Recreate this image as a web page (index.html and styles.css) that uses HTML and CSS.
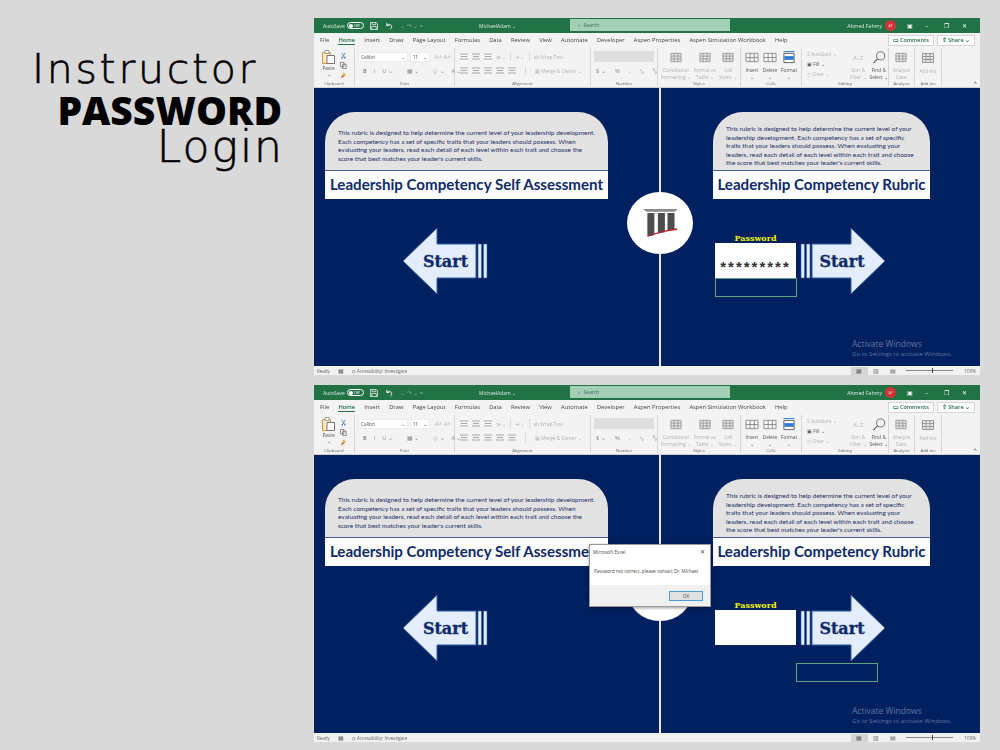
FILE: index.html
```html
<!DOCTYPE html>
<html lang="en">
<head>
    <meta charset="UTF-8">
    <title>Instructor Password Login</title>
    <link rel="stylesheet" href="styles.css">
</head>
<body>
<svg class="defs" width="0" height="0">
    <symbol id="lines" viewBox="0 0 8 7"><path d="M0 1h8M1 3.500h6M0 6h8" stroke="#a9a9a9" stroke-width="1" fill="none"/></symbol>
    <symbol id="table" viewBox="0 0 14 14"><path d="M1.500 2.500h11v9h-11zM1.500 5.500h11M1.500 8.500h11M5 2.500v9M9 2.500v9" stroke="#9a9a9a" stroke-width="1" fill="#e6e6e6"/></symbol>
    <symbol id="cells" viewBox="0 0 14 14"><path d="M.5 2.500h13v9H.5zM.5 7h13M5 2.500v9M9.500 2.500v9" stroke="#8a8a8a" stroke-width="1" fill="#f7f7f7"/></symbol>
    <symbol id="format" viewBox="0 0 14 14"><path d="M1.500 2.500h11v10h-11z" stroke="#555" fill="#fff"/><path d="M2 5.500h10v4H2z" fill="#2b7cd3"/><path d="M1 .5h12" stroke="#2b7cd3"/></symbol>
    <symbol id="paste" viewBox="0 0 13 14"><path d="M.5 2.500h8v11h-8z" fill="#fbe6c4" stroke="#d9963c"/><path d="M3 .5h4v3H3z" fill="#fff" stroke="#999"/><path d="M5 5.500h7.500v8H5z" fill="#fff" stroke="#777"/></symbol>
    <symbol id="scissors" viewBox="0 0 8 8"><path d="M2 1l3 5M6 1L3 6" stroke="#5a7fb0" fill="none"/><circle cx="2.500" cy="6.500" r="1" fill="#5a7fb0"/><circle cx="5.500" cy="6.500" r="1" fill="#5a7fb0"/></symbol>
    <symbol id="copy" viewBox="0 0 8 8"><path d="M.5.5h4v5h-4zM3 2.500h4v5H3z" stroke="#777" fill="#fff"/></symbol>
    <symbol id="brush" viewBox="0 0 8 8"><path d="M4 .5l3 3-2 1-2-2z" fill="#e9a23b"/><path d="M3 3L.5 7.500 5 5z" fill="#c8702a"/></symbol>
    <symbol id="save" viewBox="0 0 9 9"><path d="M.5.5h6.500l1.500 1.500v6.500h-8zM2.500.5v2.500h4V.5M2 8.500v-3.500h5v3.500" stroke="#fff" fill="none" stroke-width=".8"/></symbol>
    <symbol id="undo" viewBox="0 0 9 9"><path d="M2 1v3h3M2 4c2-2.500 6-1.500 5.500 2-.2 1-.8 1.700-1.500 2" stroke="#fff" fill="none"/></symbol>
    <symbol id="lens" viewBox="0 0 16 16"><circle cx="10" cy="6" r="5" stroke="#555" fill="none"/><path d="M6.500 9.500L1 15" stroke="#555" stroke-width="1.300"/></symbol>
    <symbol id="arrow" viewBox="0 0 86 68"><path d="M1 34L35 1v16h39v34H35v16z" fill="#e3edfc" stroke="#2f5f9e"/><path d="M76 17h3.500v34H76zM81.500 17H85v34h-3.500z" fill="#e3edfc" stroke="#2f5f9e" stroke-width=".6"/></symbol>
    <symbol id="pillars" viewBox="0 0 40 32"><path d="M0 0h40l-4 3H4z" fill="#8b8b8b"/><path d="M5 4.500h8V30l-8 1zM17 4.500h8V26.500l-8 1.500zM28 4.500h8V23l-8 1.500z" fill="#4d4d4d"/><path d="M5 31c11-5 22-7 34-9v2C27 25 16 28 5 32z" fill="#c4202c"/></symbol>
</svg>

<div class="page">
    <h1 class="headline">
        <span class="headline-first">Instructor</span>
        <span class="headline-black">PASSWORD</span>
        <span class="headline-last">Login</span>
    </h1>

    <div class="windows">
        <!-- first window -->
        <div class="excel">
            <div class="titlebar">
                <span class="autosave">AutoSave</span>
                <span class="toggle"><i></i>Off</span>
                <svg class="tb-icon"><use href="#save"/></svg>
                <svg class="tb-icon"><use href="#undo"/></svg>
                <span class="tb-dim">⌄ ↷ ⌄ =</span>
                <span class="filename">MichaelAdam ⌄</span>
                <span class="searchbox">⌕ &nbsp;Search</span>
                <span class="account">Ahmed Fahmy</span>
                <span class="avatar">AF</span>
                <span class="winbtns"><b>▣</b><b>–</b><b>❐</b><b>✕</b></span>
            </div>
            <div class="tabs">
                <span>File</span><span class="tab-on">Home</span><span>Insert</span><span>Draw</span><span>Page Layout</span><span>Formulas</span><span>Data</span><span>Review</span><span>View</span><span>Automate</span><span>Developer</span><span>Aspen Properties</span><span>Aspen Simulation Workbook</span><span>Help</span>
                <span class="tab-btns"><em>▭ Comments</em><em>⇧ Share ⌄</em></span>
            </div>
            <div class="ribbon">
                <div class="group g-clip">
                    <div class="group-body clip">
                        <div class="clip-paste"><svg class="ic-paste"><use href="#paste"/></svg><span>Paste</span><span>⌄</span></div>
                        <div class="clip-small"><svg><use href="#scissors"/></svg><svg><use href="#copy"/></svg><svg><use href="#brush"/></svg></div>
                    </div>
                    <div class="group-name">Clipboard</div>
                </div>
                <div class="group g-font">
                    <div class="group-body rows">
                        <div class="row"><span class="fontbox">Calibri<u>⌄</u></span><span class="sizebox">11<u>⌄</u></span><span class="dim big">A˄ A˅</span></div>
                        <div class="row dark"><b>B</b><i>I</i><span>U ⌄</span><span class="sep"></span><span>▦ ⌄</span><span class="sep"></span><span>◇ ⌄</span><span>A ⌄</span></div>
                    </div>
                    <div class="group-name">Font</div>
                </div>
                <div class="group g-align">
                    <div class="group-body rows">
                        <div class="row"><svg class="ln"><use href="#lines"/></svg><svg class="ln"><use href="#lines"/></svg><svg class="ln"><use href="#lines"/></svg><span class="dim">≫ ⌄</span><span class="sep"></span><span class="dim">⇥ ⌄</span><span class="sep"></span><span class="dim">ab Wrap Text</span></div>
                        <div class="row"><svg class="ln"><use href="#lines"/></svg><svg class="ln"><use href="#lines"/></svg><svg class="ln"><use href="#lines"/></svg><svg class="ln"><use href="#lines"/></svg><svg class="ln"><use href="#lines"/></svg><span class="sep"></span><span class="dim">▦ Merge &amp; Center ⌄</span></div>
                    </div>
                    <div class="group-name">Alignment</div>
                </div>
                <div class="group g-number">
                    <div class="group-body rows">
                        <div class="row"><span class="numbox"></span></div>
                        <div class="row wide"><span>$ ⌄</span><span>%</span><span>,</span><span>⁺₀</span><span>⁰₀</span></div>
                    </div>
                    <div class="group-name">Number</div>
                </div>
                <div class="group g-styles">
                    <div class="group-body tools">
                        <div class="tool dim"><svg><use href="#table"/></svg><span>Conditional<br>Formatting ⌄</span></div>
                        <div class="tool dim"><svg><use href="#table"/></svg><span>Format as<br>Table ⌄</span></div>
                        <div class="tool dim"><svg><use href="#table"/></svg><span>Cell<br>Styles ⌄</span></div>
                    </div>
                    <div class="group-name">Styles</div>
                </div>
                <div class="group g-cells">
                    <div class="group-body tools">
                        <div class="tool"><svg><use href="#cells"/></svg><span>Insert<br>⌄</span></div>
                        <div class="tool"><svg><use href="#cells"/></svg><span>Delete<br>⌄</span></div>
                        <div class="tool"><svg><use href="#format"/></svg><span>Format<br>⌄</span></div>
                    </div>
                    <div class="group-name">Cells</div>
                </div>
                <div class="group g-edit">
                    <div class="group-body edit">
                        <div class="edit-list"><span class="dim">Σ AutoSum ⌄</span><span>▣ Fill ⌄</span><span class="dim">◇ Clear ⌄</span></div>
                        <div class="tool dim"><span class="sort">A↓Z</span><span>Sort &amp;<br>Filter ⌄</span></div>
                        <div class="tool"><svg><use href="#lens"/></svg><span>Find &amp;<br>Select ⌄</span></div>
                    </div>
                    <div class="group-name">Editing</div>
                </div>
                <div class="group g-data">
                    <div class="group-body tools">
                        <div class="tool dim"><svg><use href="#table"/></svg><span>Analyze<br>Data</span></div>
                    </div>
                    <div class="group-name">Analysis</div>
                </div>
                <div class="group g-addin">
                    <div class="group-body tools">
                        <div class="tool dim"><svg><use href="#table"/></svg><span>Add-ins</span></div>
                    </div>
                    <div class="group-name">Add-ins</div>
                </div>
                <span class="collapse">˄</span>
            </div>
            <div class="sheet">
                <div class="divider"></div>
                <div class="logo"><svg><use href="#pillars"/></svg></div>

                <div class="card card-left">
                    <p class="card-text">This rubric is designed to help determine the current level of your leadership development.<br>Each competency has a set of specific traits that your leaders should possess. When<br>evaluating your leaders, read each detail of each level within each trait and choose the<br>score that best matches your leader's current skills.</p>
                    <div class="card-title">Leadership Competency Self Assessment</div>
                </div>
                <svg class="start start-left" viewBox="0 0 86 68"><use href="#arrow"/><text x="43.500" y="40">Start</text></svg>

                <div class="card card-right">
                    <p class="card-text">This rubric is designed to help determine the current level of your<br>leadership development. Each competency has a set of specific<br>traits that your leaders should possess. When evaluating your<br>leaders, read each detail of each level within each trait and choose<br>the score that best matches your leader's current skills.</p>
                    <div class="card-title">Leadership Competency Rubric</div>
                </div>
                <div class="pw-label">Password</div>
                <div class="pw-box">*********</div>
                <div class="cell-sel"></div>
                <svg class="start start-right" viewBox="0 0 86 68"><g transform="translate(86 0) scale(-1 1)"><use href="#arrow"/></g><text x="42" y="40">Start</text></svg>

                <div class="activate"><strong>Activate Windows</strong><span>Go to Settings to activate Windows.</span></div>
            </div>
            <div class="statusbar">
                <span>Ready</span><span class="st-icon">▦</span><span>⛭ Accessibility: Investigate</span>
                <span class="views"><b class="view-on">▦</b><b>▥</b><b>▤</b></span>
                <span class="zoom"><i></i></span>
                <span>100%</span>
            </div>
        </div>

        <!-- second window, wrong password -->
        <div class="excel">
            <div class="titlebar">
                <span class="autosave">AutoSave</span>
                <span class="toggle"><i></i>Off</span>
                <svg class="tb-icon"><use href="#save"/></svg>
                <svg class="tb-icon"><use href="#undo"/></svg>
                <span class="tb-dim">⌄ ↷ ⌄ =</span>
                <span class="filename">MichaelAdam ⌄</span>
                <span class="searchbox">⌕ &nbsp;Search</span>
                <span class="account">Ahmed Fahmy</span>
                <span class="avatar">AF</span>
                <span class="winbtns"><b>▣</b><b>–</b><b>❐</b><b>✕</b></span>
            </div>
            <div class="tabs">
                <span>File</span><span class="tab-on">Home</span><span>Insert</span><span>Draw</span><span>Page Layout</span><span>Formulas</span><span>Data</span><span>Review</span><span>View</span><span>Automate</span><span>Developer</span><span>Aspen Properties</span><span>Aspen Simulation Workbook</span><span>Help</span>
                <span class="tab-btns"><em>▭ Comments</em><em>⇧ Share ⌄</em></span>
            </div>
            <div class="ribbon">
                <div class="group g-clip">
                    <div class="group-body clip">
                        <div class="clip-paste"><svg class="ic-paste"><use href="#paste"/></svg><span>Paste</span><span>⌄</span></div>
                        <div class="clip-small"><svg><use href="#scissors"/></svg><svg><use href="#copy"/></svg><svg><use href="#brush"/></svg></div>
                    </div>
                    <div class="group-name">Clipboard</div>
                </div>
                <div class="group g-font">
                    <div class="group-body rows">
                        <div class="row"><span class="fontbox">Calibri<u>⌄</u></span><span class="sizebox">11<u>⌄</u></span><span class="dim big">A˄ A˅</span></div>
                        <div class="row dark"><b>B</b><i>I</i><span>U ⌄</span><span class="sep"></span><span>▦ ⌄</span><span class="sep"></span><span>◇ ⌄</span><span>A ⌄</span></div>
                    </div>
                    <div class="group-name">Font</div>
                </div>
                <div class="group g-align">
                    <div class="group-body rows">
                        <div class="row"><svg class="ln"><use href="#lines"/></svg><svg class="ln"><use href="#lines"/></svg><svg class="ln"><use href="#lines"/></svg><span class="dim">≫ ⌄</span><span class="sep"></span><span class="dim">⇥ ⌄</span><span class="sep"></span><span class="dim">ab Wrap Text</span></div>
                        <div class="row"><svg class="ln"><use href="#lines"/></svg><svg class="ln"><use href="#lines"/></svg><svg class="ln"><use href="#lines"/></svg><svg class="ln"><use href="#lines"/></svg><svg class="ln"><use href="#lines"/></svg><span class="sep"></span><span class="dim">▦ Merge &amp; Center ⌄</span></div>
                    </div>
                    <div class="group-name">Alignment</div>
                </div>
                <div class="group g-number">
                    <div class="group-body rows">
                        <div class="row"><span class="numbox"></span></div>
                        <div class="row wide"><span>$ ⌄</span><span>%</span><span>,</span><span>⁺₀</span><span>⁰₀</span></div>
                    </div>
                    <div class="group-name">Number</div>
                </div>
                <div class="group g-styles">
                    <div class="group-body tools">
                        <div class="tool dim"><svg><use href="#table"/></svg><span>Conditional<br>Formatting ⌄</span></div>
                        <div class="tool dim"><svg><use href="#table"/></svg><span>Format as<br>Table ⌄</span></div>
                        <div class="tool dim"><svg><use href="#table"/></svg><span>Cell<br>Styles ⌄</span></div>
                    </div>
                    <div class="group-name">Styles</div>
                </div>
                <div class="group g-cells">
                    <div class="group-body tools">
                        <div class="tool"><svg><use href="#cells"/></svg><span>Insert<br>⌄</span></div>
                        <div class="tool"><svg><use href="#cells"/></svg><span>Delete<br>⌄</span></div>
                        <div class="tool"><svg><use href="#format"/></svg><span>Format<br>⌄</span></div>
                    </div>
                    <div class="group-name">Cells</div>
                </div>
                <div class="group g-edit">
                    <div class="group-body edit">
                        <div class="edit-list"><span class="dim">Σ AutoSum ⌄</span><span>▣ Fill ⌄</span><span class="dim">◇ Clear ⌄</span></div>
                        <div class="tool dim"><span class="sort">A↓Z</span><span>Sort &amp;<br>Filter ⌄</span></div>
                        <div class="tool"><svg><use href="#lens"/></svg><span>Find &amp;<br>Select ⌄</span></div>
                    </div>
                    <div class="group-name">Editing</div>
                </div>
                <div class="group g-data">
                    <div class="group-body tools">
                        <div class="tool dim"><svg><use href="#table"/></svg><span>Analyze<br>Data</span></div>
                    </div>
                    <div class="group-name">Analysis</div>
                </div>
                <div class="group g-addin">
                    <div class="group-body tools">
                        <div class="tool dim"><svg><use href="#table"/></svg><span>Add-ins</span></div>
                    </div>
                    <div class="group-name">Add-ins</div>
                </div>
                <span class="collapse">˄</span>
            </div>
            <div class="sheet">
                <div class="divider"></div>
                <div class="logo"><svg><use href="#pillars"/></svg></div>

                <div class="card card-left">
                    <p class="card-text">This rubric is designed to help determine the current level of your leadership development.<br>Each competency has a set of specific traits that your leaders should possess. When<br>evaluating your leaders, read each detail of each level within each trait and choose the<br>score that best matches your leader's current skills.</p>
                    <div class="card-title">Leadership Competency Self Assessment</div>
                </div>
                <svg class="start start-left" viewBox="0 0 86 68"><use href="#arrow"/><text x="43.500" y="40">Start</text></svg>

                <div class="card card-right">
                    <p class="card-text">This rubric is designed to help determine the current level of your<br>leadership development. Each competency has a set of specific<br>traits that your leaders should possess. When evaluating your<br>leaders, read each detail of each level within each trait and choose<br>the score that best matches your leader's current skills.</p>
                    <div class="card-title">Leadership Competency Rubric</div>
                </div>
                <div class="pw-label">Password</div>
                <div class="pw-box"></div>
                <div class="cell-sel cell-sel-moved"></div>
                <svg class="start start-right" viewBox="0 0 86 68"><g transform="translate(86 0) scale(-1 1)"><use href="#arrow"/></g><text x="42" y="40">Start</text></svg>

                <div class="activate"><strong>Activate Windows</strong><span>Go to Settings to activate Windows.</span></div>

                <div class="dialog">
                    <div class="dialog-head"><span>Microsoft Excel</span><span class="dialog-x">✕</span></div>
                    <div class="dialog-msg">Password not correct, please contact Dr. Michael</div>
                    <div class="dialog-foot"><button class="dialog-ok">OK</button></div>
                </div>
            </div>
            <div class="statusbar">
                <span>Ready</span><span class="st-icon">▦</span><span>⛭ Accessibility: Investigate</span>
                <span class="views"><b class="view-on">▦</b><b>▥</b><b>▤</b></span>
                <span class="zoom"><i></i></span>
                <span>100%</span>
            </div>
        </div>
    </div>
</div>
</body>
</html>
```

FILE: styles.css
```css
* {
    box-sizing: border-box;
}
body {
    margin: 0;
    background-color: #d9d9d9;
    font-family: "Open Sans", "Liberation Sans", sans-serif;
}
.defs {
    position: absolute;
}
.page {
    width: 1000px;
    height: 750px;
    display: flex;
    padding-top: 18px;
}

/* left heading */
.headline {
    width: 314px;
    margin: 0;
    padding: 30px 34px 0 0;
    display: flex;
    flex-direction: column;
    align-items: flex-end;
    color: #000;
    font-family: "DejaVu Sans", sans-serif;
    font-weight: 200;
    -webkit-text-stroke: .6px #000;
}
.headline-first {
    font-size: 41px;
    line-height: 42px;
    letter-spacing: 2.700px;
    margin-right: 22px;
}
.headline-black {
    margin: 1px -2px 0 0;
    font-family: "Open Sans", sans-serif;
    font-size: 39px;
    font-weight: 800;
    line-height: 38px;
    -webkit-text-stroke: 0;
}
.headline-last {
    margin: -4px -4px 0 0;
    font-size: 44px;
    line-height: 44px;
    letter-spacing: 2px;
}

/* excel window */
.windows {
    width: 666px;
    display: flex;
    flex-direction: column;
    gap: 10px;
}
.excel {
    height: 357px;
    display: flex;
    flex-direction: column;
    background: #f3f3f3;
    color: #555;
}
.titlebar, .tabs, .ribbon, .statusbar {
    filter: blur(.3px);
}
.titlebar {
    height: 15px;
    background: #217346;
    color: #d8e8df;
    display: flex;
    align-items: center;
    font-size: 5px;
    padding-left: 9px;
    position: relative;
}
.autosave {
    width: 24px;
}
.toggle {
    width: 17px;
    height: 7px;
    border: 1px solid #fff;
    border-radius: 4px;
    display: flex;
    align-items: center;
    gap: 1px;
    padding-left: 1px;
    font-size: 4px;
    color: #fff;
    margin-right: 6px;
}
.toggle i {
    width: 4px;
    height: 4px;
    border-radius: 50%;
    background: #fff;
}
.tb-icon {
    width: 8px;
    height: 8px;
    margin-right: 7px;
}
.tb-dim {
    opacity: .5;
    font-size: 6px;
}
.filename {
    position: absolute;
    left: 165px;
}
.searchbox {
    position: absolute;
    left: 256px;
    top: 1px;
    width: 160px;
    height: 12px;
    background: #a3cfb5;
    color: #3c6e53;
    padding-left: 8px;
    line-height: 12px;
}
.account {
    margin-left: auto;
    margin-right: 3px;
    font-size: 5.200px;
}
.avatar {
    width: 11px;
    height: 11px;
    border-radius: 50%;
    background: #d13438;
    font-size: 3.500px;
    text-align: center;
    line-height: 11px;
    margin-right: 11px;
}
.winbtns {
    display: flex;
    width: 73px;
    font-size: 6px;
    color: #fff;
}
.winbtns b {
    width: 19px;
    font-weight: 400;
}
.tabs {
    height: 14px;
    display: flex;
    align-items: center;
    gap: 9.200px;
    padding-left: 6px;
    font-size: 5.800px;
    color: #444;
    position: relative;
}
.tab-on {
    color: #1d6b41;
    font-weight: 600;
    border-bottom: 1px solid #217346;
}
.tab-btns {
    position: absolute;
    right: 5px;
    top: 2px;
    display: flex;
    gap: 3px;
}
.tab-btns em {
    font-style: normal;
    font-weight: 600;
    background: #fff;
    border: 1px solid #d5d5d5;
    color: #1d6b41;
    padding: 0 4px;
    line-height: 9px;
    font-size: 5.500px;
}

/* ribbon */
.ribbon {
    height: 41px;
    display: flex;
    font-size: 4.800px;
    border-bottom: 1px solid #d0d0d0;
    position: relative;
}
.group {
    display: flex;
    flex-direction: column;
    border-right: 1px solid #d6d6d6;
    margin: 1px 0 1px;
    flex: none;
}
.group-body {
    flex: 1;
    min-height: 0;
}
.group-name {
    text-align: center;
    font-size: 4.300px;
    color: #666;
    height: 6px;
    line-height: 6px;
}
.g-clip { width: 41px; }
.g-font { width: 100px; }
.g-align { width: 136px; }
.g-number { width: 67px; }
.g-styles { width: 83px; }
.g-cells { width: 61px; }
.g-edit { width: 87px; }
.g-data { width: 26px; }
.g-addin { width: 27px; }
.clip {
    display: flex;
    padding: 2px 0 0 6px;
    gap: 3px;
}
.clip-paste {
    width: 17px;
    display: flex;
    flex-direction: column;
    align-items: center;
    line-height: 6px;
}
.ic-paste {
    width: 13px;
    height: 14px;
    margin-bottom: 1px;
}
.clip-small {
    display: flex;
    flex-direction: column;
    gap: 3px;
    padding-top: 2px;
}
.clip-small svg {
    width: 7px;
    height: 7px;
}
.rows {
    display: flex;
    flex-direction: column;
    gap: 3px;
    padding: 3px 3px 0;
}
.g-align .rows {
    padding-left: 5px;
}
.row {
    height: 11px;
    display: flex;
    align-items: center;
    gap: 4px;
    white-space: nowrap;
}
.row.dark {
    padding-left: 5px;
    gap: 7px;
    font-size: 5.500px;
    color: #8a8a8a;
}
.row.wide {
    gap: 9px;
    font-size: 6px;
    padding-left: 2px;
    color: #8a8a8a;
}
.dim {
    color: #b2b2b2;
}
.big {
    font-size: 6px;
    margin-left: 1px;
}
.fontbox, .sizebox {
    height: 10px;
    background: #fff;
    border: 1px solid #ececec;
    line-height: 8px;
    padding-left: 2px;
    display: flex;
    justify-content: space-between;
    padding-right: 2px;
}
.fontbox u, .sizebox u {
    text-decoration: none;
}
.fontbox { width: 52px; margin-right: -2px; }
.sizebox { width: 21px; }
.ln {
    width: 8px;
    height: 7px;
}
.sep {
    width: 1px;
    height: 9px;
    background: #dadada;
}
.g-align .row:last-child .sep {
    margin: 0 5px;
}
.numbox {
    width: 62px;
    height: 11px;
    background: #dedede;
}
.tools {
    display: flex;
    justify-content: space-evenly;
    padding-top: 3px;
}
.tool {
    display: flex;
    flex-direction: column;
    align-items: center;
    text-align: center;
    line-height: 6.500px;
    white-space: nowrap;
}
.tool svg {
    width: 14px;
    height: 14px;
    margin-bottom: 3px;
}
.edit {
    display: flex;
    gap: 3px;
    padding: 3px 0 0 5px;
}
.edit-list {
    width: 41px;
    display: flex;
    flex-direction: column;
    gap: 3px;
    line-height: 7px;
    white-space: nowrap;
}
.sort {
    height: 17px;
    font-size: 6px;
    line-height: 14px;
}
.collapse {
    position: absolute;
    right: 3px;
    bottom: 0;
    font-size: 6px;
}

/* sheet with the floating shapes */
.sheet {
    height: 278px;
    background: #002060;
    position: relative;
    overflow: hidden;
}
.divider {
    position: absolute;
    left: 345px;
    top: 0;
    bottom: 0;
    width: 2px;
    background: #e8e8e8;
}
.logo {
    position: absolute;
    left: 313px;
    top: 104px;
    width: 66px;
    height: 62px;
    border-radius: 50%;
    background: #fff;
    display: flex;
    align-items: center;
    justify-content: center;
}
.logo svg {
    width: 35px;
    height: 28px;
}
.card {
    position: absolute;
    top: 24px;
    height: 87px;
    display: flex;
    flex-direction: column;
    font-family: Lato, "Liberation Sans", sans-serif;
}
.card-left {
    left: 11px;
    width: 283px;
}
.card-right {
    left: 399px;
    width: 217px;
}
.card-text {
    height: 59px;
    margin: 0;
    background: #e2e2e2;
    border-radius: 30px 30px 0 0;
    border-bottom: 1px solid #3f5f93;
    color: #1f3068;
    font-size: 6.500px;
    line-height: 8.600px;
    white-space: nowrap;
    padding: 17px 0 0 13px;
}
.card-right .card-text {
    padding-top: 13px;
}
.card-title {
    flex: 1;
    background: #fff;
    color: #0e2a68;
    font-size: 15.100px;
    font-weight: 700;
    text-align: center;
    line-height: 27px;
    white-space: nowrap;
}
.start {
    position: absolute;
    top: 139px;
    width: 86px;
    height: 68px;
}
.start text {
    font-family: "DejaVu Serif", serif;
    font-weight: 700;
    font-size: 16px;
    text-anchor: middle;
    fill: #0e2a68;
    stroke: #0e2a68;
    stroke-width: .3px;
}
.start-left {
    left: 88px;
}
.start-right {
    left: 486px;
}
.pw-label {
    position: absolute;
    left: 401px;
    width: 81px;
    top: 145px;
    text-align: center;
    font-family: "DejaVu Serif", serif;
    font-weight: 700;
    font-size: 8px;
    line-height: 10px;
    color: #f5f500;
}
.pw-box {
    position: absolute;
    left: 401px;
    top: 155px;
    width: 81px;
    height: 35px;
    background: #fff;
    font-family: "Liberation Sans", sans-serif;
    font-size: 15px;
    font-weight: 700;
    letter-spacing: 2px;
    color: #333;
    text-align: center;
    line-height: 47px;
    white-space: nowrap;
}
.cell-sel {
    position: absolute;
    left: 401px;
    top: 190px;
    width: 82px;
    height: 19px;
    border: 1px solid #5fa27f;
}
.cell-sel-moved {
    left: 482px;
    top: 208px;
}
.activate {
    position: absolute;
    left: 538px;
    top: 250px;
    display: flex;
    flex-direction: column;
    color: #66749c;
}
.activate strong {
    font-weight: 400;
    font-size: 8.500px;
    line-height: 12px;
}
.activate span {
    font-size: 6.100px;
    line-height: 8px;
}

/* message box */
.dialog {
    position: absolute;
    left: 275px;
    top: 89px;
    width: 122px;
    height: 63px;
    background: #fff;
    border: 1px solid #9a9a9a;
    box-shadow: 0 1px 3px rgba(0, 0, 0, 0.4);
    display: flex;
    flex-direction: column;
    font-size: 4.600px;
    color: #444;
}
.dialog-head {
    height: 14px;
    display: flex;
    justify-content: space-between;
    align-items: center;
    padding: 0 5px 0 3px;
}
.dialog-x {
    font-size: 6px;
}
.dialog-msg {
    flex: 1;
    padding: 9px 0 0 4px;
}
.dialog-foot {
    height: 21px;
    background: #f0f0f0;
    display: flex;
    justify-content: flex-end;
    align-items: center;
    padding: 0 7px 0 0;
}
.dialog-ok {
    width: 34px;
    height: 10px;
    padding: 0;
    background: #e1e1e1;
    border: 1px solid #4f9bd9;
    font-family: inherit;
    font-size: 4.800px;
    color: #444;
}

/* status bar */
.statusbar {
    height: 9px;
    background: #f1f1f1;
    display: flex;
    align-items: center;
    gap: 8px;
    padding: 0 4px 0 3px;
    font-size: 4.500px;
    color: #666;
}
.st-icon {
    font-size: 6px;
}
.views {
    margin-left: auto;
    display: flex;
}
.views b {
    width: 17px;
    text-align: center;
    font-weight: 400;
    font-size: 6px;
}
.view-on {
    background: #d5d5d5;
}
.zoom {
    width: 47px;
    height: 1px;
    margin: 0 4px 0 -4px;
    background: #888;
    position: relative;
}
.zoom i {
    position: absolute;
    left: 26px;
    top: -2px;
    width: 1px;
    height: 5px;
    background: #444;
}
```
